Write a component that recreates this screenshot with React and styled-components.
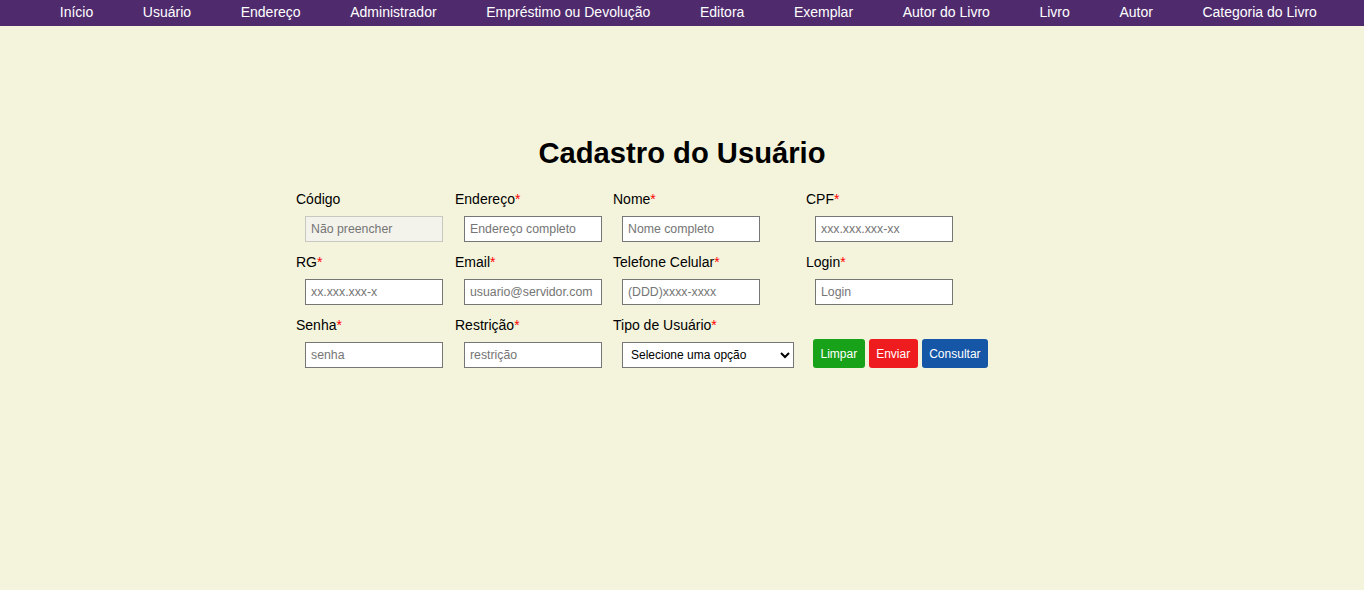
import React from 'react';
import styled, { createGlobalStyle } from 'styled-components';

const GlobalStyle = createGlobalStyle`
    html, body {
        margin: 0;
        padding: 0;
        background-color: #f4f4dc;
        font-family: "Liberation Sans", Arial, sans-serif;
    }
`;

const Page = styled.div`
    min-height: 590px;
    background-color: #f4f4dc;
`;

const NavBar = styled.nav`
    box-sizing: border-box;
    height: 26px;
    background-color: #4f2b6e;
    display: flex;
    align-items: center;
    padding: 0 0 2px 35px;
`;

const NavItem = styled.a`
    color: #fff;
    font-size: 14px;
    text-decoration: none;
    padding: 0 24.8px;
    white-space: nowrap;
    cursor: pointer;
`;

const Main = styled.main`
    display: flex;
    flex-direction: column;
    align-items: center;
    padding-top: 111px;
`;

const Title = styled.h1`
    font-size: 29.2px;
    font-weight: bold;
    color: #000;
    margin: 0 0 22px 0;
    line-height: 32px;
`;

const FormGrid = styled.form`
    display: grid;
    grid-template-columns: 159px 158px 193px 262px;
    row-gap: 12px;
    align-items: end;
`;

const Field = styled.div`
    display: flex;
    flex-direction: column;
`;

const Label = styled.label`
    font-size: 14px;
    line-height: 16px;
    color: #000;
    margin-bottom: 9px;
`;

const Required = styled.span`
    color: #f00;
`;

const Input = styled.input`
    box-sizing: border-box;
    width: 138px;
    height: 26px;
    margin-left: 9px;
    padding: 0 5px;
    font-family: "Liberation Sans", Arial, sans-serif;
    font-size: 12.3px;
    border: 1px solid ${p => (p.disabled ? '#c8c8c0' : '#767676')};
    background-color: ${p => (p.disabled ? '#f3f3ec' : '#fff')};
    color: #000;
    border-radius: 0;
    outline: none;

    &::placeholder {
        color: #757575;
    }
`;

const Select = styled.select`
    box-sizing: border-box;
    width: 172px;
    height: 26px;
    margin-left: 9px;
    padding: 0 4px;
    font-family: "Liberation Sans", Arial, sans-serif;
    font-size: 12px;
    border: 1px solid #767676;
    background-color: #fff;
    color: #000;
    border-radius: 0;
`;

const Buttons = styled.div`
    display: flex;
    gap: 4px;
    margin-left: 7px;
`;

const Button = styled.button`
    height: 29px;
    padding: 0 7.5px;
    border: none;
    border-radius: 3px;
    color: #fff;
    font-family: "Liberation Sans", Arial, sans-serif;
    font-size: 12px;
    background-color: ${p => p.$color};
    cursor: pointer;
`;

const navItems = [
    'Início', 'Usuário', 'Endereço', 'Administrador', 'Empréstimo ou Devolução',
    'Editora', 'Exemplar', 'Autor do Livro', 'Livro', 'Autor', 'Categoria do Livro'
];

const FormField = ({ label, required, placeholder, disabled }) => (
    <Field>
        <Label>{label}{required && <Required>*</Required>}</Label>
        <Input placeholder={placeholder} disabled={disabled} />
    </Field>
);

export default function App() {
    return (
        <Page>
            <GlobalStyle />
            <NavBar>
                {navItems.map(item => <NavItem key={item}>{item}</NavItem>)}
            </NavBar>
            <Main>
                <Title>Cadastro do Usuário</Title>
                <FormGrid onSubmit={e => e.preventDefault()}>
                    <FormField label="Código" placeholder="Não preencher" disabled />
                    <FormField label="Endereço" required placeholder="Endereço completo" />
                    <FormField label="Nome" required placeholder="Nome completo" />
                    <FormField label="CPF" required placeholder="xxx.xxx.xxx-xx" />

                    <FormField label="RG" required placeholder="xx.xxx.xxx-x" />
                    <FormField label="Email" required placeholder="usuario@servidor.com" />
                    <FormField label="Telefone Celular" required placeholder="(DDD)xxxx-xxxx" />
                    <FormField label="Login" required placeholder="Login" />

                    <FormField label="Senha" required placeholder="senha" />
                    <FormField label="Restrição" required placeholder="restrição" />
                    <Field>
                        <Label>Tipo de Usuário<Required>*</Required></Label>
                        <Select defaultValue="">
                            <option value="">Selecione uma opção</option>
                            <option value="aluno">Aluno</option>
                            <option value="professor">Professor</option>
                        </Select>
                    </Field>
                    <Buttons>
                        <Button type="reset" $color="#17a21a">Limpar</Button>
                        <Button type="submit" $color="#ee1c1f">Enviar</Button>
                        <Button type="button" $color="#1556a6">Consultar</Button>
                    </Buttons>
                </FormGrid>
            </Main>
        </Page>
    );
}
